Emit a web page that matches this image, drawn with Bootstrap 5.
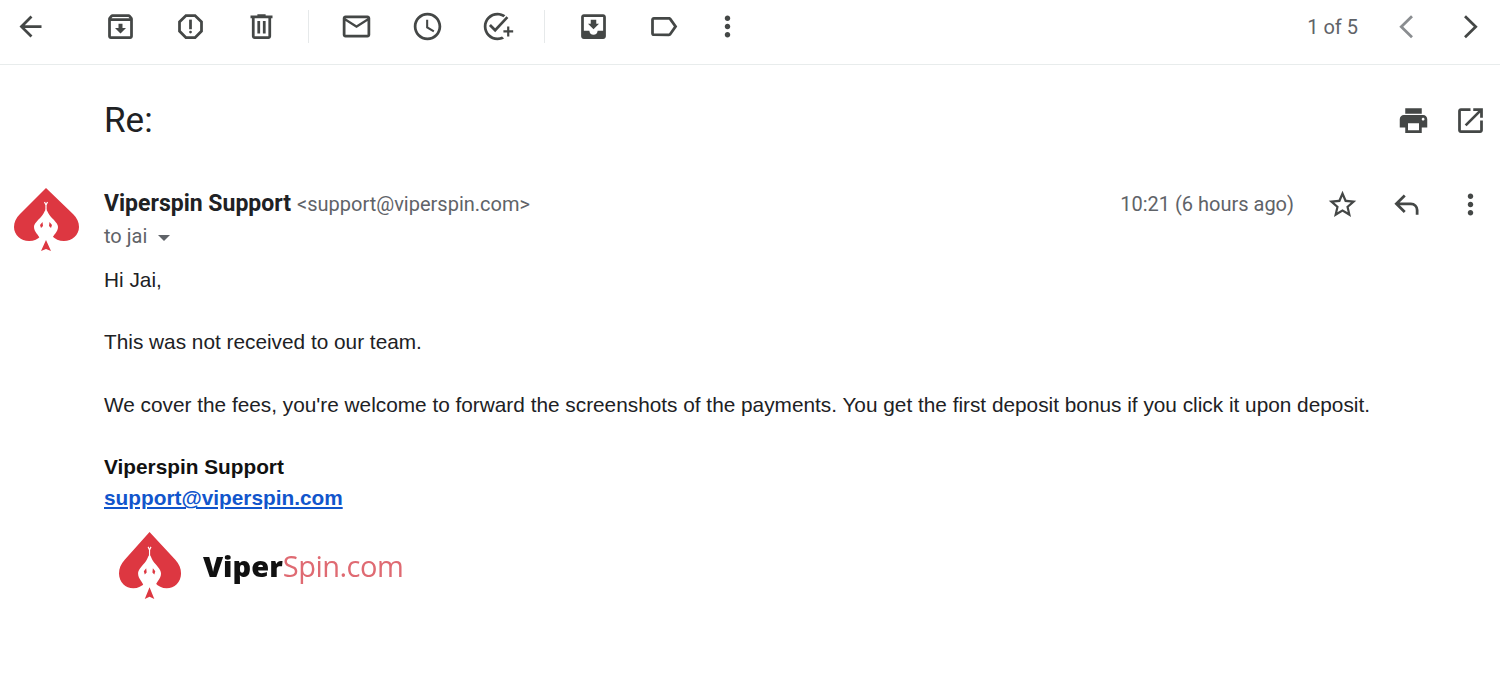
<!DOCTYPE html>
<html lang="en">
<head>
    <meta charset="UTF-8">
    <meta name="viewport" content="width=device-width, initial-scale=1.0">
    <title>Re:</title>
    <link href="https://cdn.jsdelivr.net/npm/bootstrap@5.3.0/dist/css/bootstrap.min.css" rel="stylesheet">
    <style>
        body {
            font-family: Roboto, "Liberation Sans", sans-serif;
            color: #202124;
            background: #fff;
        }
        .tool-bar {
            height: 65px;
            border-bottom: 1px solid #e8ecec;
            padding: 0 13.5px 11px 14px;
        }
        .ico {
            width: 33px;
            height: 33px;
            fill: #444746;
            flex-shrink: 0;
            display: block;
        }
        .tool-set {
            gap: 37.5px;
            margin-left: 56.5px;
        }
        .tool-split {
            width: 1px;
            height: 33px;
            background: #e6e9ea;
            margin: 0 -6px 0 -7.5px;
        }
        .tool-more {
            margin-left: -7px;
        }
        .pager-text {
            font-size: 20px;
            color: #5f6368;
            margin: 1px 31.5px 0 0;
        }
        .line-ico {
            fill: none;
            stroke: #444746;
            stroke-width: 2;
        }
        .faded {
            stroke: #8a8d90;
        }
        .pager-next {
            margin-left: 31px;
        }
        .subject-row {
            padding: 34px 13.5px 0 104px;
            height: 110px;
        }
        .subject-text {
            font-size: 35px;
            line-height: 44px;
            font-weight: 400;
            margin: 0;
        }
        .subject-tools {
            gap: 24px;
            padding-top: 5px;
        }
        .mail-row {
            padding: 0 13.5px 0 14px;
            margin-top: 13px;
        }
        .sender-logo {
            width: 66px;
            height: 64px;
            margin-right: 24px;
        }
        .sender-line {
            height: 32px;
        }
        .sender-name {
            font-size: 23px;
            font-weight: 700;
            margin-top: 1px;
        }
        .sender-mail {
            font-size: 20px;
            color: #5f6368;
            margin-left: 6px;
        }
        .mail-time {
            font-size: 20px;
            color: #5f6368;
            margin-right: 31.5px;
        }
        .head-reply {
            margin-left: 32px;
        }
        .head-more {
            margin-left: 30px;
        }
        .to-line {
            font-size: 20px;
            color: #5f6368;
            line-height: 32px;
        }
        .caret-down {
            display: inline-block;
            width: 0;
            height: 0;
            border-left: 6.5px solid transparent;
            border-right: 6.5px solid transparent;
            border-top: 6.5px solid #5f6368;
            margin-left: 6px;
            vertical-align: 2px;
        }
        .mail-body {
            font-family: "Liberation Sans", Arial, sans-serif;
            font-size: 20.8px;
            line-height: 31.2px;
            color: #202124;
            margin-top: 12px;
        }
        .mail-body p {
            margin: 0 0 31.2px;
        }
        .sign-name {
            font-weight: 700;
            color: #111;
        }
        .sign-link {
            font-weight: 700;
            color: #1155cc;
            display: block;
        }
        .sign-logo {
            margin-top: 18px;
            margin-left: 15px;
            filter: blur(.5px);
        }
        .sign-logo svg {
            width: 63px;
            height: 68px;
            margin-right: 21px;
        }
        .sign-word {
            font-family: "Open Sans", sans-serif;
            font-size: 29px;
            line-height: 1;
            color: #df6a72;
            letter-spacing: -.5px;
        }
        .sign-word b {
            color: #111;
            font-weight: 800;
            letter-spacing: 0;
        }
    </style>
</head>
<body>

<svg width="0" height="0" class="position-absolute">
    <symbol id="spade" viewBox="0 0 66 64" preserveAspectRatio="none">
        <path fill="#dd3741" d="M32 0L6 26C2 30 0 34 0 39c0 8 7 14 15 14 5 0 9-2 12-5h11c3 3 7 5 12 5 8 0 15-6 15-14 0-5-2-9-6-13z"/>
        <path fill="#fff" d="M32 21c-2 3-3 6-5 8-4 4-7 7-7 10 0 5 5 8 6 12l-3 3h18l-3-3c1-4 6-7 6-12 0-3-3-6-7-10-2-2-3-5-5-8z"/>
        <path fill="#dd3741" d="M32 52l-5 11 5-2 5 2z"/>
        <path fill="none" stroke="#fff" stroke-width="1.2" d="M32 22v-5M32 17l-1.500-3M32 17l1.500-3"/>
        <path fill="#dd3741" d="M26 37l2.500-3 .5 4-2 2zM38 37l-2.500-3-.5 4 2 2z"/>
    </symbol>
</svg>

<div class="tool-bar d-flex align-items-center">
    <svg class="ico" viewBox="0 0 24 24"><path d="M20 11H7.830l5.590-5.590L12 4l-8 8 8 8 1.410-1.410L7.830 13H20v-2z"/></svg>
    <div class="tool-set d-flex align-items-center">
        <svg class="ico" viewBox="0 0 24 24"><path d="M20.540 5.230l-1.390-1.680C18.880 3.210 18.470 3 18 3H6c-.47 0-.88.21-1.160.55L3.460 5.230C3.170 5.570 3 6.020 3 6.500V19c0 1.100.9 2 2 2h14c1.100 0 2-.9 2-2V6.500c0-.48-.17-.93-.46-1.270zM6.240 5h11.520l.83 1H5.420l.82-1zM5 19V8h14v11H5zm8.450-9h-2.900v3H8l4 4 4-4h-2.550z"/></svg>
        <svg class="ico" viewBox="0 0 24 24"><path d="M15.730 3H8.270L3 8.270v7.460L8.270 21h7.460L21 15.730V8.270L15.730 3zM19 14.900L14.900 19H9.100L5 14.900V9.100L9.100 5h5.800L19 9.100v5.800z"/><circle cx="12" cy="16" r="1"/><path d="M11 7h2v7h-2z"/></svg>
        <svg class="ico" viewBox="0 0 24 24"><path d="M15 4V3H9v1H4v2h1v13c0 1.100.9 2 2 2h10c1.100 0 2-.9 2-2V6h1V4h-5zm2 15H7V6h10v13zM9 8h2v9H9zm4 0h2v9h-2z"/></svg>
        <span class="tool-split"></span>
        <svg class="ico" viewBox="0 0 24 24"><path d="M20 4H4c-1.100 0-2 .9-2 2v12c0 1.100.9 2 2 2h16c1.100 0 2-.9 2-2V6c0-1.100-.9-2-2-2zm0 14H4V8l8 5 8-5v10zm-8-7L4 6h16l-8 5z"/></svg>
        <svg class="ico" viewBox="0 0 24 24"><path d="M11.990 2C6.470 2 2 6.480 2 12s4.470 10 9.990 10C17.520 22 22 17.520 22 12S17.520 2 11.990 2zM12 20c-4.420 0-8-3.580-8-8s3.580-8 8-8 8 3.580 8 8-3.580 8-8 8zm.5-13H11v6l5.250 3.150.75-1.230-4.500-2.670z"/></svg>
        <svg class="ico" viewBox="0 0 24 24"><path d="M18.500 4.500L10.300 13.300l-3.100-3.100-1.400 1.400 4.500 4.500 9.600-10.200zM12 20c-4.410 0-8-3.590-8-8s3.590-8 8-8c1.570 0 3.040.46 4.280 1.250l1.450-1.450C16.100 2.670 14.130 2 12 2 6.480 2 2 6.480 2 12s4.480 10 10 10c1.730 0 3.360-.44 4.780-1.220l-1.500-1.500c-1 .46-2.110.72-3.280.72zm7-5.200h-2.700v1.600H19v2.800h1.600v-2.800h2.800v-1.600h-2.800V12H19z"/></svg>
        <span class="tool-split"></span>
        <svg class="ico" viewBox="0 0 24 24"><path d="M19 3H4.990c-1.110 0-1.980.9-1.980 2L3 19c0 1.100.88 2 1.990 2H19c1.100 0 2-.9 2-2V5c0-1.100-.9-2-2-2zm0 12h-4c0 1.660-1.350 3-3 3s-3-1.340-3-3H4.990V5H19v10zm-3-5h-2V7h-4v3H8l4 4 4-4z"/></svg>
        <svg class="ico" viewBox="0 0 24 24"><path d="M17.630 5.840C17.270 5.330 16.670 5 16 5L5 5.010C3.900 5.010 3 5.900 3 7v10c0 1.100.9 1.990 2 1.990L16 19c.67 0 1.270-.33 1.630-.84L22 12l-4.370-6.160zM16 17H5V7h11l3.550 5L16 17z"/></svg>
        <svg class="ico tool-more" viewBox="0 0 24 24"><path d="M12 8c1.100 0 2-.9 2-2s-.9-2-2-2-2 .9-2 2 .9 2 2 2zm0 2c-1.100 0-2 .9-2 2s.9 2 2 2 2-.9 2-2-.9-2-2-2zm0 6c-1.100 0-2 .9-2 2s.9 2 2 2 2-.9 2-2-.9-2-2-2z"/></svg>
    </div>
    <div class="ms-auto d-flex align-items-center">
        <span class="pager-text">1 of 5</span>
        <svg class="ico line-ico faded" viewBox="0 0 24 24"><path d="M16 4.500L8.200 12.200 16 19.800"/></svg>
        <svg class="ico line-ico pager-next" viewBox="0 0 24 24"><path d="M8 4.500L15.800 12.200 8 19.800"/></svg>
    </div>
</div>

<div class="subject-row d-flex justify-content-between align-items-start">
    <h1 class="subject-text">Re:</h1>
    <div class="subject-tools d-flex">
        <svg class="ico" viewBox="0 0 24 24"><path d="M19 8H5c-1.660 0-3 1.340-3 3v6h4v4h12v-4h4v-6c0-1.660-1.340-3-3-3zm-3 11H8v-5h8v5zm3-7c-.55 0-1-.45-1-1s.45-1 1-1 1 .45 1 1-.45 1-1 1zm-1-9H6v4h12V3z"/></svg>
        <svg class="ico" viewBox="0 0 24 24"><path d="M19 19H5V5h7V3H5c-1.110 0-2 .9-2 2v14c0 1.100.89 2 2 2h14c1.100 0 2-.9 2-2v-7h-2v7zM14 3v2h3.590l-9.830 9.830 1.410 1.410L19 6.410V10h2V3h-7z"/></svg>
    </div>
</div>

<div class="mail-row d-flex">
    <svg class="sender-logo flex-shrink-0"><use href="#spade"/></svg>
    <div class="flex-grow-1">
        <div class="sender-line d-flex align-items-center">
            <span class="sender-name">Viperspin Support</span>
            <span class="sender-mail">&lt;support@viperspin.com&gt;</span>
            <span class="mail-time ms-auto">10:21 (6 hours ago)</span>
            <svg class="ico" viewBox="0 0 24 24"><path d="M22 9.240l-7.190-.62L12 2 9.190 8.630 2 9.240l5.460 4.730L5.820 21 12 17.270 18.180 21l-1.630-7.030L22 9.240zM12 15.400l-3.760 2.270 1-4.280-3.320-2.880 4.380-.38L12 6.100l1.710 4.040 4.380.38-3.320 2.880 1 4.280L12 15.400z"/></svg>
            <svg class="ico line-ico head-reply" viewBox="0 0 24 24"><path d="M10 5.500L3.900 11.500L10 17.500M4 11.500H14.500a4.500 4.500 0 0 1 4.500 4.500V19.500"/></svg>
            <svg class="ico head-more" viewBox="0 0 24 24"><path d="M12 8c1.100 0 2-.9 2-2s-.9-2-2-2-2 .9-2 2 .9 2 2 2zm0 2c-1.100 0-2 .9-2 2s.9 2 2 2 2-.9 2-2-.9-2-2-2zm0 6c-1.100 0-2 .9-2 2s.9 2 2 2 2-.9 2-2-.9-2-2-2z"/></svg>
        </div>
        <div class="to-line">to jai <span class="caret-down"></span></div>
        <div class="mail-body">
            <p>Hi Jai,</p>
            <p>This was not received to our team.</p>
            <p>We cover the fees, you're welcome to forward the screenshots of the payments. You get the first deposit bonus if you click it upon deposit.</p>
            <div class="sign-name">Viperspin Support</div>
            <a class="sign-link" href="#">support@viperspin.com</a>
            <div class="sign-logo d-flex align-items-center">
                <svg><use href="#spade"/></svg>
                <span class="sign-word"><b>Viper</b>Spin.com</span>
            </div>
        </div>
    </div>
</div>

<script src="https://cdn.jsdelivr.net/npm/bootstrap@5.3.0/dist/js/bootstrap.bundle.min.js"></script>
</body>
</html>
